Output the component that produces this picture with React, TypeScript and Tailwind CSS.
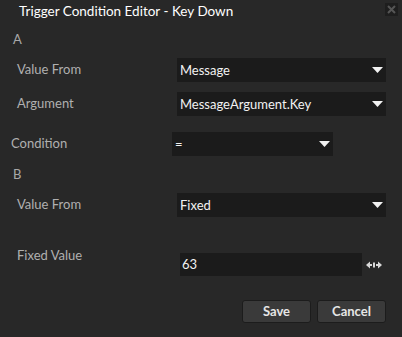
import React from "react";

const font = { fontFamily: 'Lato, "Noto Sans", sans-serif' };

function Caret() {
  return (
    <svg width="11" height="6" viewBox="0 0 11 6" className="shrink-0">
      <polygon points="0,0 11,0 5.5,6" fill="#f2f2f2" />
    </svg>
  );
}

function Dropdown({ value, w }: { value: string; w: string }) {
  return (
    <div className={`flex items-center justify-between h-[24px] bg-[#1b1b1b] pl-[3px] pr-[3px] ${w}`}>
      <span className="text-[13px] text-[#f2f2f2] leading-none">{value}</span>
      <Caret />
    </div>
  );
}

export default function App() {
  return (
    <div className="w-[402px] h-[337px] bg-[#282828] flex flex-col text-[#b0b0b0]" style={font}>
      <div className="flex items-start justify-between h-[22px]">
        <span className="pl-[19px] pt-[1px] text-[13.5px] text-white leading-[20px]">
          Trigger Condition Editor - Key Down
        </span>
        <div className="mt-[3px] mr-[4px] w-[13px] h-[13px] bg-[#1e1e1e] flex items-center justify-center">
          <svg width="9" height="9" viewBox="0 0 9 9">
            <path d="M1 1 L8 8 M8 1 L1 8" stroke="#555" strokeWidth="2" />
          </svg>
        </div>
      </div>
      <div className="pl-[13px] mt-[10px] h-[14px] text-[13px] leading-[14px] text-[#a8a8a8]">A</div>
      <div className="flex items-center mt-[12px] pl-[17px]">
        <span className="w-[160px] text-[13px]">Value From</span>
        <Dropdown value="Message" w="w-[209px]" />
      </div>
      <div className="flex items-center mt-[10px] pl-[17px]">
        <span className="w-[160px] text-[13px]">Argument</span>
        <Dropdown value="MessageArgument.Key" w="w-[209px]" />
      </div>
      <div className="flex items-center mt-[16px] pl-[11px]">
        <span className="w-[161px] text-[13px]">Condition</span>
        <Dropdown value="=" w="w-[161px]" />
      </div>
      <div className="pl-[13px] mt-[11px] h-[14px] text-[13px] leading-[14px] text-[#a8a8a8]">B</div>
      <div className="flex items-center mt-[12px] pl-[17px]">
        <span className="w-[160px] text-[13px]">Value From</span>
        <Dropdown value="Fixed" w="w-[209px]" />
      </div>
      <div className="flex items-start mt-[39px] pl-[17px] h-[32px]">
        <span className="w-[163px] text-[13px] leading-[14px] mt-[-8px]">Fixed Value</span>
        <div className="w-[182px] h-[23px] mt-[-3px] bg-[#1b1b1b] flex items-center pl-[2px]">
          <span className="text-[13px] text-[#f2f2f2]">63</span>
        </div>
        <svg width="16" height="8" viewBox="0 0 16 8" className="ml-[4px] mt-[5px]">
          <polygon points="0,4 4,0.5 4,7.5" fill="#d8d8d8" />
          <rect x="4" y="3" width="2" height="2" fill="#d8d8d8" />
          <rect x="7" y="1.5" width="2" height="5" fill="#d8d8d8" />
          <rect x="10" y="3" width="2" height="2" fill="#d8d8d8" />
          <polygon points="16,4 12,0.5 12,7.5" fill="#d8d8d8" />
        </svg>
      </div>
      <div className="flex justify-end gap-[6px] pr-[16px] mt-[12px]">
        <button className="w-[69px] h-[23px] bg-[#3a3a3a] border border-[#1c1c1c] rounded-[3px] text-[13px] text-[#e6e6e6] font-bold">
          Save
        </button>
        <button className="w-[69px] h-[23px] bg-[#3a3a3a] border border-[#1c1c1c] rounded-[3px] text-[13px] text-[#e6e6e6] font-bold">
          Cancel
        </button>
      </div>
    </div>
  );
}
